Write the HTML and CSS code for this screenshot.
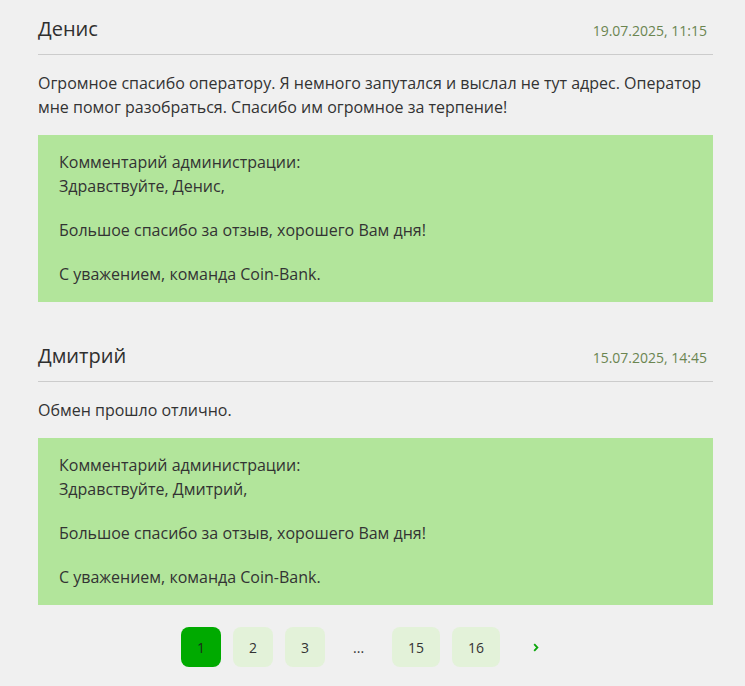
FILE: index.html
```html
<!DOCTYPE html>
<html lang="ru">
<head>
<meta charset="utf-8">
<title>Отзывы</title>
<link rel="stylesheet" href="styles.css">
</head>
<body>
<div class="reviews">
  <div class="review">
    <div class="review-head">
      <div class="review-name">Денис</div>
      <div class="review-date">19.07.2025, 11:15</div>
    </div>
    <p class="review-text">Огромное спасибо оператору. Я немного запутался и выслал не тут адрес. Оператор мне помог разобраться. Спасибо им огромное за терпение!</p>
    <div class="admin-reply">
      <p>Комментарий администрации:<br>Здравствуйте, Денис,</p>
      <p>Большое спасибо за отзыв, хорошего Вам дня!</p>
      <p>С уважением, команда Coin-Bank.</p>
    </div>
  </div>
  <div class="review">
    <div class="review-head">
      <div class="review-name">Дмитрий</div>
      <div class="review-date">15.07.2025, 14:45</div>
    </div>
    <p class="review-text">Обмен прошло отлично.</p>
    <div class="admin-reply">
      <p>Комментарий администрации:<br>Здравствуйте, Дмитрий,</p>
      <p>Большое спасибо за отзыв, хорошего Вам дня!</p>
      <p>С уважением, команда Coin-Bank.</p>
    </div>
  </div>
  <nav class="pagination">
    <span class="page active">1</span>
    <span class="page">2</span>
    <span class="page">3</span>
    <span class="page dots">...</span>
    <span class="page">15</span>
    <span class="page">16</span>
    <span class="page next"><svg width="6" height="9" viewBox="0 0 6 9"><path d="M1.2 1.2 L4.4 4.5 L1.2 7.8" fill="none" stroke="#0aa60a" stroke-width="1.8"/></svg></span>
  </nav>
</div>
</body>
</html>
```
FILE: styles.css
```css
html, body {
  margin: 0;
  padding: 0;
  background: #f0f0f0;
}
body {
  font-family: "Open Sans", "Liberation Sans", sans-serif;
  color: #333;
}
.reviews {
  padding: 0 32px 0 38px;
}
.review {
  margin-bottom: 25px;
}
.review-head {
  display: flex;
  justify-content: space-between;
  align-items: baseline;
  padding-top: 15px;
  padding-bottom: 11px;
  border-bottom: 1px solid #cccccc;
}
.review-name {
  font-size: 20px;
  line-height: 28px;
  color: #2f2f2f;
}
.review-date {
  font-size: 14px;
  line-height: 20px;
  color: #6b8550;
  padding-right: 6px;
}
.review-text {
  margin: 16px 0 16px;
  font-size: 16px;
  line-height: 24px;
}
.admin-reply {
  background: #b2e59b;
  padding: 15px 21px 16px;
  font-size: 16px;
  line-height: 24px;
}
.admin-reply p {
  margin: 0 0 20px;
}
.admin-reply p:last-child {
  margin-bottom: 0;
}
.pagination {
  display: flex;
  gap: 12px;
  padding-left: 143px;
  margin-top: -3px;
}
.page {
  min-width: 40px;
  height: 40px;
  box-sizing: border-box;
  padding: 0 16px;
  border-radius: 8px;
  background: #e3f2d9;
  display: flex;
  align-items: center;
  justify-content: center;
  font-size: 14px;
  color: #333;
}
.page.active {
  background: #00aa00;
  padding: 0;
  color: #1c2a1c;
}
.page.dots,
.page.next {
  background: transparent;
}
.page.dots {
  padding: 0 16px;
}
.page.next {
  padding: 0 21px;
}
```
